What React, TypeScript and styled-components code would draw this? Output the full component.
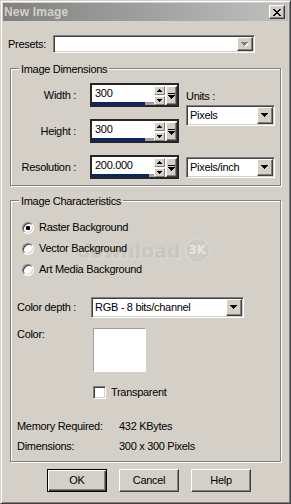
import styled, { createGlobalStyle, css } from 'styled-components'

const GlobalStyle = createGlobalStyle`
  html, body {
    margin: 0;
    padding: 0;
    background: #d4d0c8;
  }
  body {
    font-family: "Liberation Sans", Arial, sans-serif;
    font-size: 11px;
    line-height: 13px;
    letter-spacing: -0.3px;
    color: #000;
  }
  *, *::before, *::after {
    box-sizing: border-box;
  }
`

const sunken = css`
  border: 1px solid;
  border-color: #808080 #ffffff #ffffff #808080;
  box-shadow: inset 1px 1px 0 #404040, inset -1px -1px 0 #d4d0c8;
`

const raised = css`
  background: #d4d0c8;
  border: 1px solid;
  border-color: #ffffff #404040 #404040 #ffffff;
  box-shadow: inset -1px -1px 0 #808080;
`

const Window = styled.div`
  width: 291px;
  height: 504px;
  display: flex;
  flex-direction: column;
  padding: 2px;
  background: #d4d0c8;
  border: 1px solid;
  border-color: #d4d0c8 #404040 #404040 #d4d0c8;
  box-shadow: inset 1px 1px 0 #ffffff, inset -1px -1px 0 #808080;
`

const TitleBar = styled.div`
  height: 18px;
  display: flex;
  align-items: center;
  justify-content: space-between;
  padding: 0 3px 0 1px;
  background: linear-gradient(to right, #808080, #c0c0c0);
`

const TitleText = styled.span`
  font-size: 12px;
  font-weight: bold;
  letter-spacing: 0.2px;
  color: #d4d0c8;
`

const CloseButton = styled.div`
  ${raised};
  width: 16px;
  height: 14px;
  display: flex;
  align-items: center;
  justify-content: center;
`

const Body = styled.div`
  flex: 1;
  display: flex;
  flex-direction: column;
  padding: 0 6px 0 5px;
`

const PresetsRow = styled.div`
  display: flex;
  align-items: center;
  margin-top: 14px;
`

const FieldLabel = styled.span`
  width: 45px;
`

const ComboBox = styled.div<{ $width: number; $height: number }>`
  ${sunken};
  width: ${p => p.$width}px;
  height: ${p => p.$height}px;
  padding: 1px;
  display: flex;
  background: #ffffff;
`

const ComboText = styled.span`
  flex: 1;
  align-self: center;
  padding-left: 2px;
`

const DropButton = styled.div`
  ${raised};
  width: 16px;
  display: flex;
  align-items: center;
  justify-content: center;
`

const Group = styled.div<{ $mt: number }>`
  position: relative;
  width: 271px;
  margin: ${p => p.$mt}px 0 0 2px;
  border: 1px solid #808080;
  box-shadow: 1px 1px 0 #ffffff, inset 1px 1px 0 #ffffff;
`

const GroupTitle = styled.span`
  position: absolute;
  top: -6px;
  left: 8px;
  padding: 0 2px;
  background: #d4d0c8;
`

const DimGrid = styled.div`
  display: grid;
  grid-template-columns: 72px 89px 89px;
  grid-template-rows: repeat(3, 24px);
  column-gap: 7px;
  row-gap: 12px;
  padding: 14px 0 6px 0;
`

const RowLabel = styled.span`
  align-self: center;
  text-align: right;
  padding: 1px 7px 0 0;
`

const Spinner = styled.div`
  display: flex;
  height: 24px;
  border: 2px solid #262626;
  background: #ffffff;
`

const SpinValue = styled.div`
  flex: 1;
  display: flex;
  flex-direction: column;
  padding-top: 2px;
`

const SpinText = styled.span`
  padding-left: 3px;
`

const SpinTrack = styled.div<{ $fill: number }>`
  margin-top: auto;
  height: 3px;
  background: #a0a0a0;

  &::before {
    content: '';
    display: block;
    height: 100%;
    width: ${p => p.$fill}%;
    background: #0a246a;
  }
`

const SpinColumn = styled.div`
  width: 12px;
  display: flex;
  flex-direction: column;
  gap: 1px;
  padding: 1px 1px 0 0;
`

const SpinButton = styled.div`
  background: #d4d0c8;
  border: 1px solid;
  border-color: #ffffff #808080 #808080 #ffffff;
  height: 9px;
  display: flex;
  align-items: center;
  justify-content: center;
`

const SideButton = styled.div`
  ${raised};
  width: 11px;
  height: 19px;
  margin-top: 1px;
  display: flex;
  align-items: center;
  justify-content: center;
`

const UnitsBlock = styled.div`
  grid-column: 3;
  grid-row: 1 / 3;
  display: flex;
  flex-direction: column;
  gap: 2px;
  padding-top: 7px;
`

const ResolutionUnits = styled.div`
  grid-column: 3;
  grid-row: 3;
  align-self: center;
`

const CharBody = styled.div`
  position: relative;
  display: flex;
  flex-direction: column;
  padding: 16px 0 8px 0;
`

const RadioList = styled.div`
  display: flex;
  flex-direction: column;
  padding-left: 11px;
`

const RadioRow = styled.label`
  height: 21px;
  display: flex;
  align-items: center;
  gap: 5px;
`

const RadioDot = styled.span<{ $checked?: boolean }>`
  width: 12px;
  height: 12px;
  border-radius: 50%;
  background: #ffffff;
  border: 1px solid;
  border-color: #808080 #ffffff #ffffff #808080;
  box-shadow: inset 1px 1px 0 #404040, inset -1px -1px 0 #d4d0c8;
  display: flex;
  align-items: center;
  justify-content: center;

  &::after {
    content: '';
    width: 4px;
    height: 4px;
    border-radius: 1px;
    background: #000;
    display: ${p => (p.$checked ? 'block' : 'none')};
  }
`

const FormRow = styled.div<{ $mt: number; $align?: string }>`
  display: grid;
  grid-template-columns: 74px auto;
  align-items: ${p => p.$align ?? 'center'};
  justify-items: start;
  padding-left: 6px;
  margin-top: ${p => p.$mt}px;
`

const Swatch = styled.div`
  width: 53px;
  height: 44px;
  margin-left: 2px;
  background: #ffffff;
  border: 1px solid;
  border-color: #a0a0a0 #ffffff #ffffff #a0a0a0;
`

const CheckRow = styled.label`
  display: flex;
  align-items: center;
  gap: 5px;
  margin-left: 2px;
`

const CheckBox = styled.span`
  ${sunken};
  width: 13px;
  height: 13px;
  background: #ffffff;
`

const InfoRow = styled.div<{ $mt: number }>`
  display: grid;
  grid-template-columns: 102px auto;
  padding-left: 6px;
  margin-top: ${p => p.$mt}px;
`

const Watermark = styled.div`
  position: absolute;
  left: 66px;
  top: 37px;
  display: flex;
  align-items: center;
  gap: 4px;
  pointer-events: none;
`

const WatermarkText = styled.span`
  font-family: "DejaVu Sans", sans-serif;
  font-size: 19px;
  line-height: 22px;
  font-weight: bold;
  letter-spacing: 0;
  color: #c9c6bf;
  text-shadow: 1px 1px 0 #dcdad4;
`

const WatermarkBadge = styled.span`
  width: 25px;
  height: 25px;
  border-radius: 50%;
  background: #cdcac3;
  border: 1px solid #dedcd6;
  display: flex;
  align-items: center;
  justify-content: center;
  font-family: "DejaVu Sans", sans-serif;
  font-size: 12px;
  font-weight: bold;
  letter-spacing: 0;
  color: #e6e4df;
`

const ButtonRow = styled.div`
  display: flex;
  gap: 12px;
  margin-top: 7px;
  padding-left: 39px;
`

const PushButton = styled.div<{ $default?: boolean }>`
  width: 60px;
  height: 23px;
  display: flex;
  align-items: center;
  justify-content: center;
  background: #d4d0c8;
  ${p =>
    p.$default
      ? css`
          border: 1px solid #000;
          box-shadow: inset 1px 1px 0 #ffffff, inset -1px -1px 0 #404040,
            inset -2px -2px 0 #808080;
        `
      : raised};
`

const DownArrow = ({ disabled }: { disabled?: boolean }) => (
  <svg width="8" height="5" viewBox="0 0 8 5">
    {disabled && (
      <path d="M1 1h7v1h-1v1h-1v1h-1v1h-1v-1h-1v-1h-1v-1h-1z" fill="#ffffff" />
    )}
    <path
      d="M0 0h7v1h-1v1h-1v1h-1v1h-1v-1h-1v-1h-1v-1h-1z"
      fill={disabled ? '#808080' : '#000'}
    />
  </svg>
)

const SmallArrow = ({ up }: { up?: boolean }) => (
  <svg width="5" height="3" viewBox="0 0 5 3">
    <path
      d={up ? 'M2 0h1v1h1v1h1v1h-5v-1h1v-1h1z' : 'M0 0h5v1h-1v1h-1v1h-1v-1h-1v-1h-1z'}
      fill="#000"
    />
  </svg>
)

const BarArrow = () => (
  <svg width="7" height="6" viewBox="0 0 7 6">
    <path d="M0 0h7v1h-7z M0 2h7v1h-1v1h-1v1h-1v1h-1v-1h-1v-1h-1v-1h-1z" fill="#000" />
  </svg>
)

const CloseGlyph = () => (
  <svg width="8" height="7" viewBox="0 0 8 7">
    <path
      d="M0 0h2v1h-2z M6 0h2v1h-2z M1 1h2v1h-2z M5 1h2v1h-2z M2 2h4v1h-4z M3 3h2v1h-2z M2 4h4v1h-4z M1 5h2v1h-2z M5 5h2v1h-2z M0 6h2v1h-2z M6 6h2v1h-2z"
      fill="#000"
    />
  </svg>
)

const SpinField = ({ value, fill }: { value: string; fill: number }) => (
  <Spinner>
    <SpinValue>
      <SpinText>{value}</SpinText>
      <SpinTrack $fill={fill} />
    </SpinValue>
    <SpinColumn>
      <SpinButton>
        <SmallArrow up />
      </SpinButton>
      <SpinButton>
        <SmallArrow />
      </SpinButton>
    </SpinColumn>
    <SideButton>
      <BarArrow />
    </SideButton>
  </Spinner>
)

const Select = ({ text, width }: { text: string; width: number }) => (
  <ComboBox $width={width} $height={21}>
    <ComboText>{text}</ComboText>
    <DropButton>
      <DownArrow />
    </DropButton>
  </ComboBox>
)

const dimensions = [
  { label: 'Width :', value: '300', fill: 85 },
  { label: 'Height :', value: '300', fill: 85 },
  { label: 'Resolution :', value: '200.000', fill: 92 },
]

const backgrounds = ['Raster Background', 'Vector Background', 'Art Media Background']

export default function App() {
  return (
    <>
      <GlobalStyle />
      <Window>
        <TitleBar>
          <TitleText>New Image</TitleText>
          <CloseButton>
            <CloseGlyph />
          </CloseButton>
        </TitleBar>
        <Body>
          <PresetsRow>
            <FieldLabel>Presets:</FieldLabel>
            <ComboBox $width={202} $height={18}>
              <ComboText />
              <DropButton>
                <DownArrow disabled />
              </DropButton>
            </ComboBox>
          </PresetsRow>

          <Group $mt={15}>
            <GroupTitle>Image Dimensions</GroupTitle>
            <DimGrid>
              {dimensions.map(d => [
                <RowLabel key={d.label + 'l'}>{d.label}</RowLabel>,
                <SpinField key={d.label + 's'} value={d.value} fill={d.fill} />,
              ])}
              <UnitsBlock>
                <span>Units :</span>
                <Select text="Pixels" width={89} />
              </UnitsBlock>
              <ResolutionUnits>
                <Select text="Pixels/inch" width={89} />
              </ResolutionUnits>
            </DimGrid>
          </Group>

          <Group $mt={14}>
            <GroupTitle>Image Characteristics</GroupTitle>
            <Watermark>
              <WatermarkText>download</WatermarkText>
              <WatermarkBadge>3K</WatermarkBadge>
            </Watermark>
            <CharBody>
              <RadioList>
                {backgrounds.map((b, i) => (
                  <RadioRow key={b}>
                    <RadioDot $checked={i === 0} />
                    {b}
                  </RadioRow>
                ))}
              </RadioList>
              <FormRow $mt={17}>
                <span>Color depth :</span>
                <Select text="RGB - 8 bits/channel" width={153} />
              </FormRow>
              <FormRow $mt={10} $align="start">
                <span>Color:</span>
                <Swatch />
              </FormRow>
              <FormRow $mt={14}>
                <span />
                <CheckRow>
                  <CheckBox />
                  Transparent
                </CheckRow>
              </FormRow>
              <InfoRow $mt={21}>
                <span>Memory Required:</span>
                <span>432 KBytes</span>
              </InfoRow>
              <InfoRow $mt={7}>
                <span>Dimensions:</span>
                <span>300 x 300 Pixels</span>
              </InfoRow>
            </CharBody>
          </Group>

          <ButtonRow>
            <PushButton $default>OK</PushButton>
            <PushButton>Cancel</PushButton>
            <PushButton>Help</PushButton>
          </ButtonRow>
        </Body>
      </Window>
    </>
  )
}
